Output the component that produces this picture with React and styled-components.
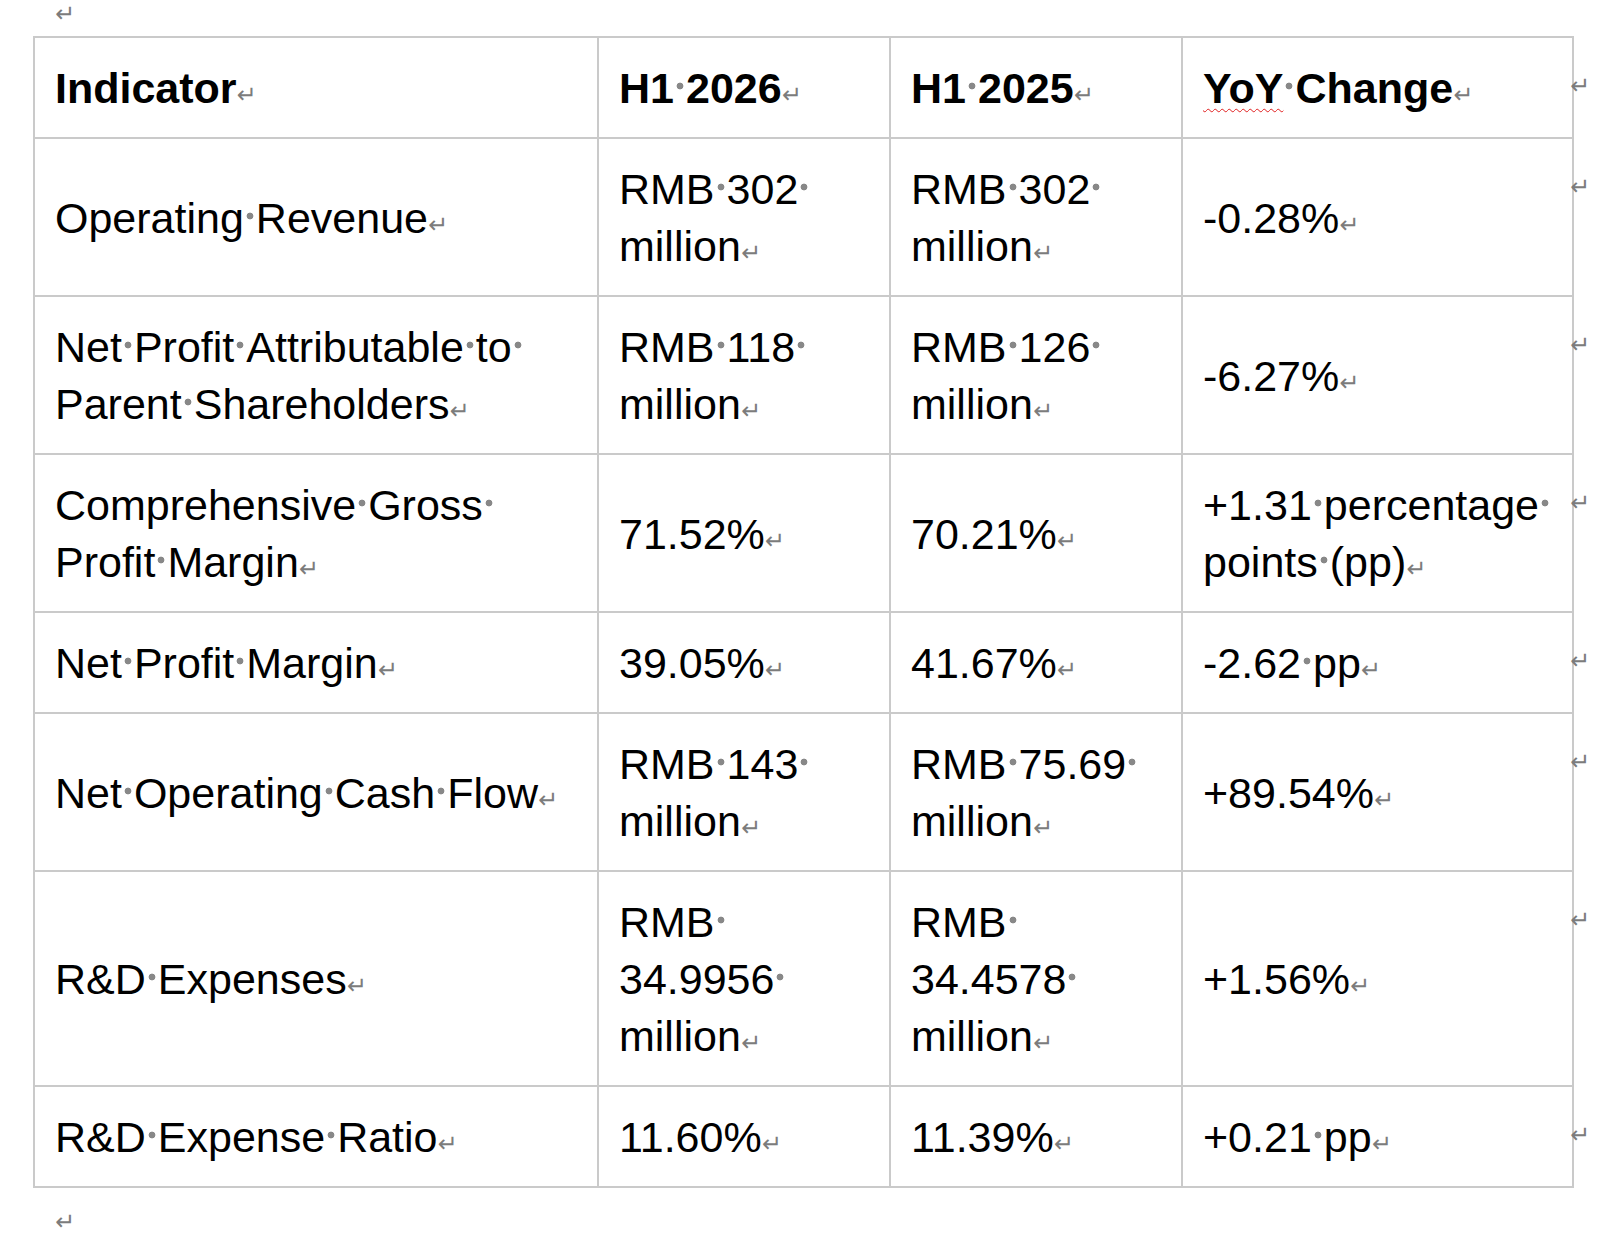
import React from 'react';
import styled, { createGlobalStyle } from 'styled-components';

const GlobalStyle = createGlobalStyle`
  body {
    margin: 0;
    background: #ffffff;
    font-family: "Liberation Sans", Helvetica, Arial, sans-serif;
    color: #000000;
  }
`;

const header = ['Indicator', 'H1 2026', 'H1 2025', 'YoY Change'];

// each cell is a list of lines, as Word broke them
const rows = [
  [['Operating Revenue'], ['RMB 302 ', 'million'], ['RMB 302 ', 'million'], ['-0.28%']],
  [['Net Profit Attributable to ', 'Parent Shareholders'], ['RMB 118 ', 'million'], ['RMB 126 ', 'million'], ['-6.27%']],
  [['Comprehensive Gross ', 'Profit Margin'], ['71.52%'], ['70.21%'], ['+1.31 percentage ', 'points (pp)']],
  [['Net Profit Margin'], ['39.05%'], ['41.67%'], ['-2.62 pp']],
  [['Net Operating Cash Flow'], ['RMB 143 ', 'million'], ['RMB 75.69 ', 'million'], ['+89.54%']],
  [['R&D Expenses'], ['RMB ', '34.9956 ', 'million'], ['RMB ', '34.4578 ', 'million'], ['+1.56%']],
  [['R&D Expense Ratio'], ['11.60%'], ['11.39%'], ['+0.21 pp']],
];

const Page = styled.div`
  width: 1624px;
  min-height: 1236px;
`;

const Para = styled.div`
  height: ${p => p.$h}px;
  padding-left: 55px;
  padding-top: ${p => p.$top}px;
  box-sizing: border-box;
  line-height: 1;
`;

const Mark = styled.span`
  font-family: "DejaVu Sans", sans-serif;
  font-size: 24px;
  font-weight: normal;
  color: #7c7c7c;
  line-height: 1;
`;

const Table = styled.div`
  display: grid;
  grid-template-columns: 566px 292px 292px 391px 30px;
  margin-left: 33px;
`;

const Cell = styled.div`
  display: flex;
  align-items: center;
  padding: 22px 18px 20px 20px;
  border-right: 2px solid #cacaca;
  border-bottom: 2px solid #cacaca;
  border-left: ${p => (p.$first ? '2px solid #cacaca' : 'none')};
  border-top: ${p => (p.$head ? '2px solid #cacaca' : 'none')};
  font-size: 43px;
  line-height: 57px;
  font-weight: ${p => (p.$head ? 700 : 400)};
  white-space: nowrap;
`;

const Lines = styled.div`
  display: flex;
  flex-direction: column;
`;

// a space shown the way Word shows it with formatting marks on
const Dot = styled.span`
  display: inline-block;
  overflow: hidden;
  width: 12px;
  height: 8px;
  font-size: 0;
  line-height: 0;
  vertical-align: 13px;
  background: radial-gradient(circle, #888888 3.1px, rgba(136, 136, 136, 0) 3.7px);
`;

const Squiggle = styled.span`
  text-decoration: underline wavy #e02020;
  text-decoration-thickness: 1px;
  text-underline-offset: 5px;
`;

const RowEnd = styled.div`
  margin-left: -4px;
  padding-top: ${p => (p.$head ? 38 : 36)}px;
  font-family: "DejaVu Sans", sans-serif;
  font-size: 24px;
  line-height: 1;
  color: #7c7c7c;
`;

function Text({ text, squiggle }) {
  const words = text.split(' ');
  return words.map((w, i) => (
    <React.Fragment key={i}>
      {squiggle && w === squiggle ? <Squiggle>{w}</Squiggle> : w}
      {i < words.length - 1 && <Dot>{'\u00a0'}</Dot>}
    </React.Fragment>
  ));
}

function CellLines({ lines, squiggle }) {
  return (
    <Lines>
      {lines.map((line, i) => (
        <span key={i}>
          <Text text={line} squiggle={squiggle} />
          {i === lines.length - 1 && <Mark>↵</Mark>}
        </span>
      ))}
    </Lines>
  );
}

export default function App() {
  return (
    <Page>
      <GlobalStyle />
      <Para $h={36} $top={2}>
        <Mark>↵</Mark>
      </Para>
      <Table>
        {header.map((h, i) => (
          <Cell key={h} $head $first={i === 0}>
            <CellLines lines={[h]} squiggle="YoY" />
          </Cell>
        ))}
        <RowEnd $head>↵</RowEnd>
        {rows.map((row, r) => (
          <React.Fragment key={r}>
            {row.map((lines, c) => (
              <Cell key={c} $first={c === 0}>
                <CellLines lines={lines} />
              </Cell>
            ))}
            <RowEnd>↵</RowEnd>
          </React.Fragment>
        ))}
      </Table>
      <Para $h={50} $top={22}>
        <Mark>↵</Mark>
      </Para>
    </Page>
  );
}
